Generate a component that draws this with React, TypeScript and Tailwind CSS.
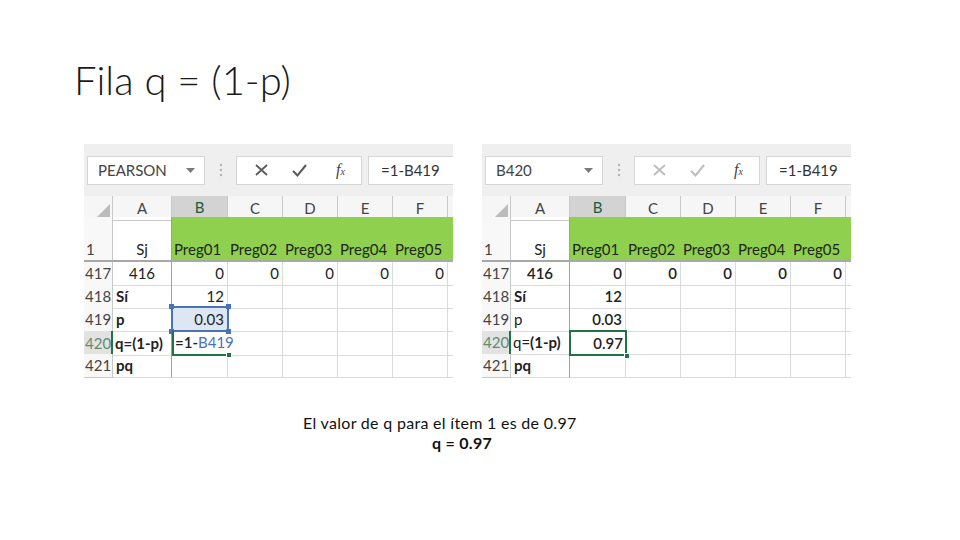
import React from 'react';

type Mode = 'edit' | 'done';

const GRID = 'grid grid-cols-[29px_59px_56px_55px_55px_55px_55px_5px]';
const CELL = 'border-r border-b border-[#dadada] flex items-center px-[3px] whitespace-nowrap';

function Dots() {
  return (
    <svg width="4" height="14" viewBox="0 0 4 14">
      <circle cx="2" cy="2" r="1.2" fill="#b5b5b5" />
      <circle cx="2" cy="7" r="1.2" fill="#b5b5b5" />
      <circle cx="2" cy="12" r="1.2" fill="#b5b5b5" />
    </svg>
  );
}

function Toolbar({ name, mode }: { name: string; mode: Mode }) {
  const ink = mode === 'edit' ? '#5a5a5a' : '#bdbdbd';
  return (
    <div className="h-[52px] bg-[#efefef] flex items-center pl-[3px] text-[#444]">
      <div className="w-[118px] h-[29px] bg-white border border-[#d6d6d6] flex items-center justify-between pl-[10px] pr-[9px] text-[15px]">
        <span>{name}</span>
        <svg width="9" height="5" viewBox="0 0 9 5">
          <polygon points="0,0 9,0 4.5,5" fill="#7a7a7a" />
        </svg>
      </div>
      <div className="w-[31px] flex justify-center">
        <Dots />
      </div>
      <div className="w-[126px] h-[29px] bg-white border border-[#d6d6d6] flex items-center">
        <svg className="ml-[18px]" width="13" height="12" viewBox="0 0 13 12">
          <path d="M1 1 L12 11 M12 1 L1 11" stroke={ink} strokeWidth="1.8" />
        </svg>
        <svg className="ml-[24px]" width="15" height="13" viewBox="0 0 15 13">
          <path d="M1 7 L5.5 11.5 L14 1" stroke={ink} strokeWidth="2" fill="none" />
        </svg>
        <span className="ml-[29px] font-['Liberation_Serif',serif] italic text-[16px] text-[#444] leading-none">
          f<span className="text-[10px]">x</span>
        </span>
      </div>
      <div className="ml-[6px] flex-1 h-[29px] bg-white border border-r-0 border-[#d6d6d6] flex items-center pl-[12px] text-[15px] text-[#333]">
        =1-B419
      </div>
    </div>
  );
}

function HeaderRow() {
  const letters = ['C', 'D', 'E', 'F'];
  return (
    <div className={`${GRID} h-[21px] bg-[#f6f6f6] text-[15px] text-[#444]`}>
      <div className="border-r border-b border-[#c8c8c8] flex items-end justify-end pr-[2px] pb-[2px]">
        <svg width="14" height="14" viewBox="0 0 14 14">
          <polygon points="14,0 14,14 0,14" fill="#bcbcbc" />
        </svg>
      </div>
      <div className="border-r border-b border-[#c8c8c8] flex items-center justify-center">A</div>
      <div className="border-r border-[#c8c8c8] border-b-2 border-b-[#217346] bg-[#d3d3d3] text-[#1e5b3a] flex items-center justify-center">
        B
      </div>
      {letters.map((l) => (
        <div key={l} className="border-r border-b border-[#c8c8c8] flex items-center justify-center">
          {l}
        </div>
      ))}
      <div className="border-b border-[#c8c8c8]" />
    </div>
  );
}

function TitleRow() {
  const pregs = ['Preg01', 'Preg02', 'Preg03', 'Preg04', 'Preg05'];
  return (
    <div className={`${GRID} h-[45px] text-[15px] text-[#222] border-b-2 border-[#a8a8a8]`}>
      <div className="border-r border-[#c8c8c8] bg-[#f8f8f8] flex items-end pl-[2px] text-[#444]">1</div>
      <div className="border-r border-[#a0a0a0] flex items-end justify-center">Sj</div>
      {pregs.map((p) => (
        <div key={p} className="bg-[#8fd14f] flex items-end pl-[2px]">
          {p}
        </div>
      ))}
      <div className="bg-[#8fd14f]" />
    </div>
  );
}

function Handle() {
  return <div className="absolute right-[-4px] bottom-[-4px] w-[6px] h-[6px] bg-[#217346] border border-white" />;
}

function BlueCorner({ pos }: { pos: string }) {
  return <div className={`absolute w-[5px] h-[5px] bg-[#4a73b5] ${pos}`} />;
}

function Sheet({ mode }: { mode: Mode }) {
  const strong = mode === 'done' ? 'font-semibold' : '';
  const rowHead = (n: string, active = false) =>
    active ? (
      <div className="border-r-2 border-r-[#217346] border-b border-b-[#dadada] bg-[#e2e2e2] flex items-center pl-[1px] text-[#5e8c6f]">
        {n}
      </div>
    ) : (
      <div className="border-r border-b border-[#c8c8c8] bg-[#f8f8f8] flex items-center pl-[1px] text-[#444]">{n}</div>
    );
  const blanks = (k: string) =>
    [0, 1, 2, 3].map((i) => <div key={k + i} className={CELL} />);

  return (
    <div className="w-[369px] h-[237px] bg-white overflow-hidden font-['Lato',sans-serif] relative">
      <Toolbar name={mode === 'edit' ? 'PEARSON' : 'B420'} mode={mode} />
      <HeaderRow />
      <TitleRow />

      <div className={`${GRID} h-[23px] text-[15px] text-[#222]`}>
        {rowHead('417')}
        <div className={`${CELL} border-r-[#a0a0a0] justify-center ${strong}`}>416</div>
        {['0', '0', '0', '0', '0'].map((v, i) => (
          <div key={i} className={`${CELL} justify-end ${strong}`}>{v}</div>
        ))}
        <div className="border-b border-[#dadada]" />
      </div>

      <div className={`${GRID} h-[23px] text-[15px] text-[#222]`}>
        {rowHead('418')}
        <div className={`${CELL} border-r-[#a0a0a0] font-bold`}>Sí</div>
        <div className={`${CELL} justify-end ${strong}`}>12</div>
        {blanks('a')}
        <div className="border-b border-[#dadada]" />
      </div>

      <div className={`${GRID} h-[23px] text-[15px] text-[#222]`}>
        {rowHead('419')}
        <div className={`${CELL} border-r-[#a0a0a0] ${mode === 'edit' ? 'font-bold' : ''}`}>p</div>
        {mode === 'edit' ? (
          <div className={`${CELL} justify-end relative bg-[#dde6f3]`}>
            <span className="relative z-10">0.03</span>
            <div className="absolute left-[-1px] top-[-2px] right-[-2px] bottom-[-1px] border-2 border-[#4a73b5]" />
            <BlueCorner pos="left-[-3px] top-[-4px]" />
            <BlueCorner pos="right-[-4px] top-[-4px]" />
            <BlueCorner pos="left-[-3px] bottom-[-3px]" />
            <BlueCorner pos="right-[-4px] bottom-[-3px]" />
          </div>
        ) : (
          <div className={`${CELL} justify-end ${strong}`}>0.03</div>
        )}
        {blanks('b')}
        <div className="border-b border-[#dadada]" />
      </div>

      <div className={`${GRID} h-[23px] text-[15px] text-[#222]`}>
        {rowHead('420', true)}
        <div className={`${CELL} border-r-[#a0a0a0] pl-[2px]`}>
          {mode === 'edit' ? (
            <span className="font-bold">q=(1-p)</span>
          ) : (
            <span>
              q=<span className="font-bold">(1-p)</span>
            </span>
          )}
        </div>
        {mode === 'edit' ? (
          <div className="relative border-l-2 border-b-2 border-[#217346] flex items-center pl-[1px]">
            <span className="font-semibold">=1-</span>
            <span className="text-[#4a73b5]">B419</span>
            <Handle />
          </div>
        ) : (
          <div className="relative flex items-center justify-end px-[3px] font-semibold">
            0.97
            <div className="absolute left-[-1px] top-[-1px] right-[-1px] bottom-[-1px] border-2 border-[#217346]" />
            <Handle />
          </div>
        )}
        {blanks('c')}
        <div className="border-b border-[#dadada]" />
      </div>

      <div className={`${GRID} h-[23px] text-[15px] text-[#222]`}>
        {rowHead('421')}
        <div className={`${CELL} border-r-[#a0a0a0] font-bold`}>pq</div>
        <div className={CELL} />
        {blanks('d')}
        <div className="border-b border-[#dadada]" />
      </div>
    </div>
  );
}

export default function App() {
  return (
    <div className="w-[960px] h-[540px] bg-white flex flex-col">
      <div className="h-[144px] pl-[74px] pt-[52px]">
        <h1 className="font-['Lato',sans-serif] font-light text-[40px] leading-[56px] text-[#1a1a1a]">
          Fila q = (1-p)
        </h1>
      </div>

      <div className="flex pl-[84px] gap-[29px]">
        <Sheet mode="edit" />
        <Sheet mode="done" />
      </div>

      <div className="mt-[32px] w-[273px] ml-[303px] font-['Lato',sans-serif] text-[16px] tracking-[0.3px] leading-[20px] text-[#111]">
        <p className="text-center whitespace-nowrap">El valor de q para el ítem 1 es de 0.97</p>
        <p className="text-center pl-[45px] font-bold">q = 0.97</p>
      </div>
    </div>
  );
}
